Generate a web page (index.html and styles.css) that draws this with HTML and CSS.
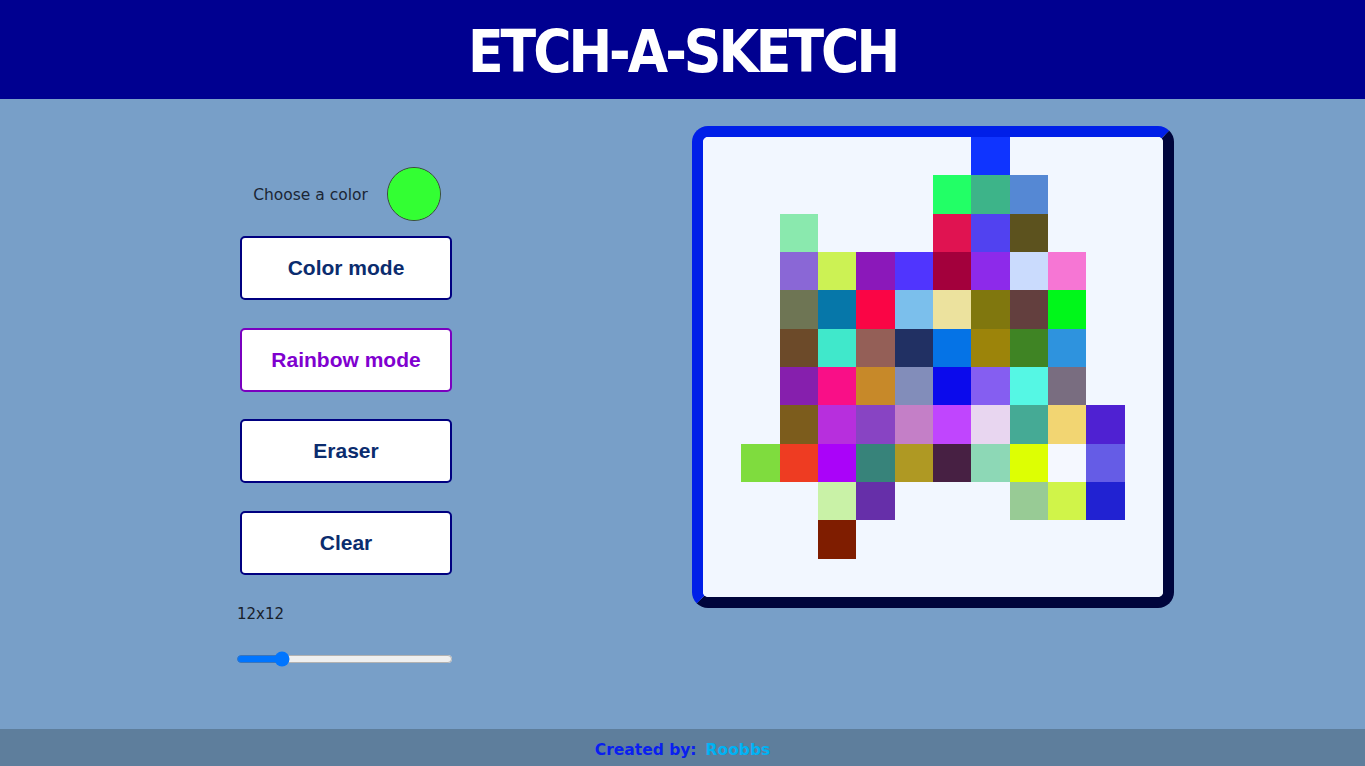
FILE: index.html
```html
<!DOCTYPE html>
<html lang="en">
<head>
<meta charset="utf-8">
<title>Etch-a-Sketch</title>
<link rel="stylesheet" href="styles.css">
</head>
<body>
<header class="header"><h1 class="title">ETCH-A-SKETCH</h1></header>
<main class="main">
  <section class="controls">
    <div class="picker-row">
      <label class="picker-label" for="picker">Choose a color</label>
      <input class="picker" id="picker" type="color" value="#33ff33">
    </div>
    <button class="btn">Color mode</button>
    <button class="btn btn-active">Rainbow mode</button>
    <button class="btn">Eraser</button>
    <button class="btn">Clear</button>
    <div class="size-label">12x12</div>
    <input class="slider" type="range" min="0" max="64" value="12">
  </section>
  <section class="frame">
    <div class="grid">
      <div></div><div></div><div></div><div></div><div></div><div></div><div></div><div style="background:#0f34ff"></div><div></div><div></div><div></div><div></div>
      <div></div><div></div><div></div><div></div><div></div><div></div><div style="background:#22ff66"></div><div style="background:#3db489"></div><div style="background:#5588d4"></div><div></div><div></div><div></div>
      <div></div><div></div><div style="background:#8ae9ae"></div><div></div><div></div><div></div><div style="background:#e01351"></div><div style="background:#5142f0"></div><div style="background:#5c521e"></div><div></div><div></div><div></div>
      <div></div><div></div><div style="background:#8a67d6"></div><div style="background:#ccf254"></div><div style="background:#8b18ba"></div><div style="background:#5035fe"></div><div style="background:#a3003c"></div><div style="background:#8d2aea"></div><div style="background:#cadbfd"></div><div style="background:#f676d4"></div><div></div><div></div>
      <div></div><div></div><div style="background:#6e7554"></div><div style="background:#0677a9"></div><div style="background:#fa0545"></div><div style="background:#7bbfec"></div><div style="background:#ece29e"></div><div style="background:#80770e"></div><div style="background:#633f3e"></div><div style="background:#00f71a"></div><div></div><div></div>
      <div></div><div></div><div style="background:#6c4a29"></div><div style="background:#40e8cb"></div><div style="background:#945f57"></div><div style="background:#213063"></div><div style="background:#0573e6"></div><div style="background:#9c840a"></div><div style="background:#3f8424"></div><div style="background:#2e93de"></div><div></div><div></div>
      <div></div><div></div><div style="background:#861fad"></div><div style="background:#f90f87"></div><div style="background:#c78929"></div><div style="background:#828dba"></div><div style="background:#0b0aec"></div><div style="background:#855ef1"></div><div style="background:#55f7e4"></div><div style="background:#796d80"></div><div></div><div></div>
      <div></div><div></div><div style="background:#7c5c1c"></div><div style="background:#b72fdd"></div><div style="background:#8844c3"></div><div style="background:#c47fc7"></div><div style="background:#c045fe"></div><div style="background:#e8d6f0"></div><div style="background:#45aa95"></div><div style="background:#f2d572"></div><div style="background:#4f21d2"></div><div></div>
      <div></div><div style="background:#7fdc3e"></div><div style="background:#ee3c22"></div><div style="background:#aa03f9"></div><div style="background:#37837a"></div><div style="background:#af9923"></div><div style="background:#472043"></div><div style="background:#8dd8b6"></div><div style="background:#ddff03"></div><div style="background:#f5f8ff"></div><div style="background:#655ce6"></div><div></div>
      <div></div><div></div><div></div><div style="background:#c9f2a7"></div><div style="background:#662fa9"></div><div></div><div></div><div></div><div style="background:#98cb95"></div><div style="background:#d0f449"></div><div style="background:#2122d2"></div><div></div>
      <div></div><div></div><div></div><div style="background:#7f1d00"></div><div></div><div></div><div></div><div></div><div></div><div></div><div></div><div></div>
      <div></div><div></div><div></div><div></div><div></div><div></div><div></div><div></div><div></div><div></div><div></div><div></div>
    </div>
  </section>
</main>
<footer class="footer">
  <span class="credit">Created by:</span>
  <span class="author">Roobbs</span>
</footer>
</body>
</html>
```

FILE: styles.css
```css
* { box-sizing: border-box; }

html, body {
  margin: 0;
  height: 100%;
}

body {
  background: #789fc8;
  font-family: "DejaVu Sans", Verdana, sans-serif;
  display: flex;
  flex-direction: column;
  min-height: 766px;
}

.header {
  background: #000090;
  height: 99px;
  display: flex;
  align-items: center;
  justify-content: center;
}

.title {
  margin: 0;
  color: #ffffff;
  font-family: "DejaVu Sans", sans-serif;
  font-stretch: condensed;
  font-weight: bold;
  font-size: 58px;
  letter-spacing: -3px;
  line-height: 1;
  padding-top: 4px;
}

.main {
  flex: 1;
  display: flex;
  align-items: flex-start;
  padding: 27px 0 0 236px;
  gap: 236px;
}

.controls {
  width: 220px;
  margin-top: 41px;
  display: flex;
  flex-direction: column;
  align-items: center;
}

.picker-row {
  display: flex;
  align-items: center;
  gap: 19px;
  height: 53px;
  margin-bottom: 16px;
  padding-left: 2px;
}

.picker-label {
  font-size: 15.5px;
  color: #1b2635;
  padding-top: 2px;
}

.picker {
  -webkit-appearance: none;
  appearance: none;
  width: 54px;
  height: 54px;
  padding: 0;
  border: 1px solid #3c4a3c;
  border-radius: 50%;
  background: #33ff33;
  overflow: hidden;
  cursor: pointer;
}
.picker::-webkit-color-swatch-wrapper { padding: 0; }
.picker::-webkit-color-swatch { border: none; border-radius: 50%; }

.btn {
  width: 212px;
  height: 64px;
  margin-bottom: 28px;
  background: #ffffff;
  border: 2px solid #000080;
  border-radius: 5px;
  color: #0b2c6e;
  font-family: "Liberation Sans", Arial, sans-serif;
  font-weight: bold;
  font-size: 21px;
  cursor: pointer;
}
.btn-active + .btn { margin-top: -1px; }
.btn:nth-of-type(3) { margin-bottom: 28px; }

.btn-active {
  border-color: #7a00bf;
  color: #8000cf;
}

.size-label {
  align-self: flex-start;
  margin: 2px 0 0 1px;
  font-size: 15px;
  color: #18212b;
}

.slider {
  width: 217px;
  margin: 28px 0 0 0;
  align-self: flex-start;
  accent-color: #0075ff;
}

.frame {
  width: 482px;
  height: 482px;
  padding: 0;
  border: 11px solid;
  border-color: #001fe8 #00053c #00053c #001fe8;
  border-radius: 16px;
  background: #f2f7ff;
  overflow: hidden;
}

.grid {
  width: 460px;
  height: 460px;
  display: grid;
  grid-template-columns: repeat(12, 1fr);
  grid-template-rows: repeat(12, 1fr);
  border-radius: 4px;
  background: #f2f7ff;
}

.footer {
  height: 37px;
  background: #5e7e9c;
  display: flex;
  align-items: center;
  justify-content: center;
  gap: 9px;
  font-weight: bold;
  font-size: 15.5px;
  padding-top: 5px;
}

.credit { color: #0a1ff0; }
.author { color: #00b2f4; }
```
